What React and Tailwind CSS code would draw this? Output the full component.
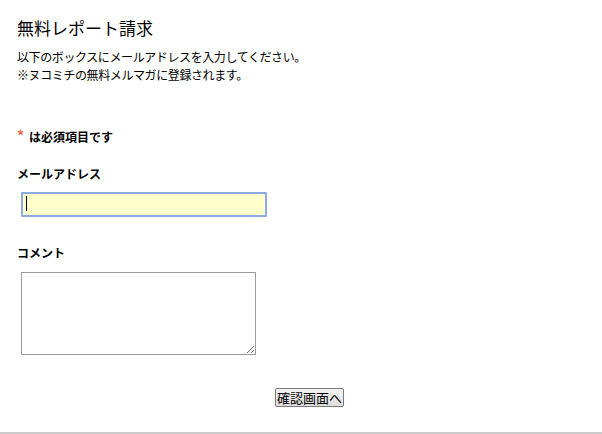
import React from "react";

export default function App() {
  return (
    <div className="w-[602px] h-[434px] bg-white flex flex-col text-black font-['Noto_Sans_CJK_JP','Noto_Sans',sans-serif]">
      <div className="flex-1 flex flex-col pl-[17px] pt-[16px]">
        <h1 className="text-[17px] leading-[24px] font-normal text-black">無料レポート請求</h1>

        <div className="mt-[8px] text-[12px] leading-[18px] tracking-[-0.4px]">
          <p>以下のボックスにメールアドレスを入力してください。</p>
          <p>※ヌコミチの無料メルマガに登録されます。</p>
        </div>

        <p className="mt-[44px] text-[12px] leading-[18px] font-bold">
          <span className="text-[#f0603c] text-[14px] leading-[14px] align-top font-bold">*</span>
          <span className="ml-[5px]">は必須項目です</span>
        </p>

        <label className="mt-[19px] text-[12px] leading-[18px] font-bold">メールアドレス</label>
        <div className="relative ml-[4px] mt-[8px] w-[246px] h-[25px]">
          <input
            type="text"
            className="w-full h-full bg-[#ffffcc] border-2 border-[#8aaae2] rounded-[1px] outline-none caret-transparent px-[3px] text-[13px]"
          />
          <span className="absolute left-[5px] top-[5px] w-[1px] h-[15px] bg-black" />
        </div>

        <label className="mt-[28px] text-[12px] leading-[18px] font-bold">コメント</label>
        <textarea className="ml-[4px] mt-[10px] w-[235px] h-[83px] border border-[#9a9a9a] bg-white outline-none resize" />

        <div className="mt-[33px] flex justify-center">
          <button className="h-[19px] w-[69px] border border-[#7a7a7a] rounded-[2px] bg-gradient-to-b from-[#f4f4f4] to-[#dedede] text-[13px] leading-[17px] text-black flex items-center justify-center">
            確認画面へ
          </button>
        </div>
      </div>
      <div className="h-[2px] bg-[#cccccc]" />
    </div>
  );
}
